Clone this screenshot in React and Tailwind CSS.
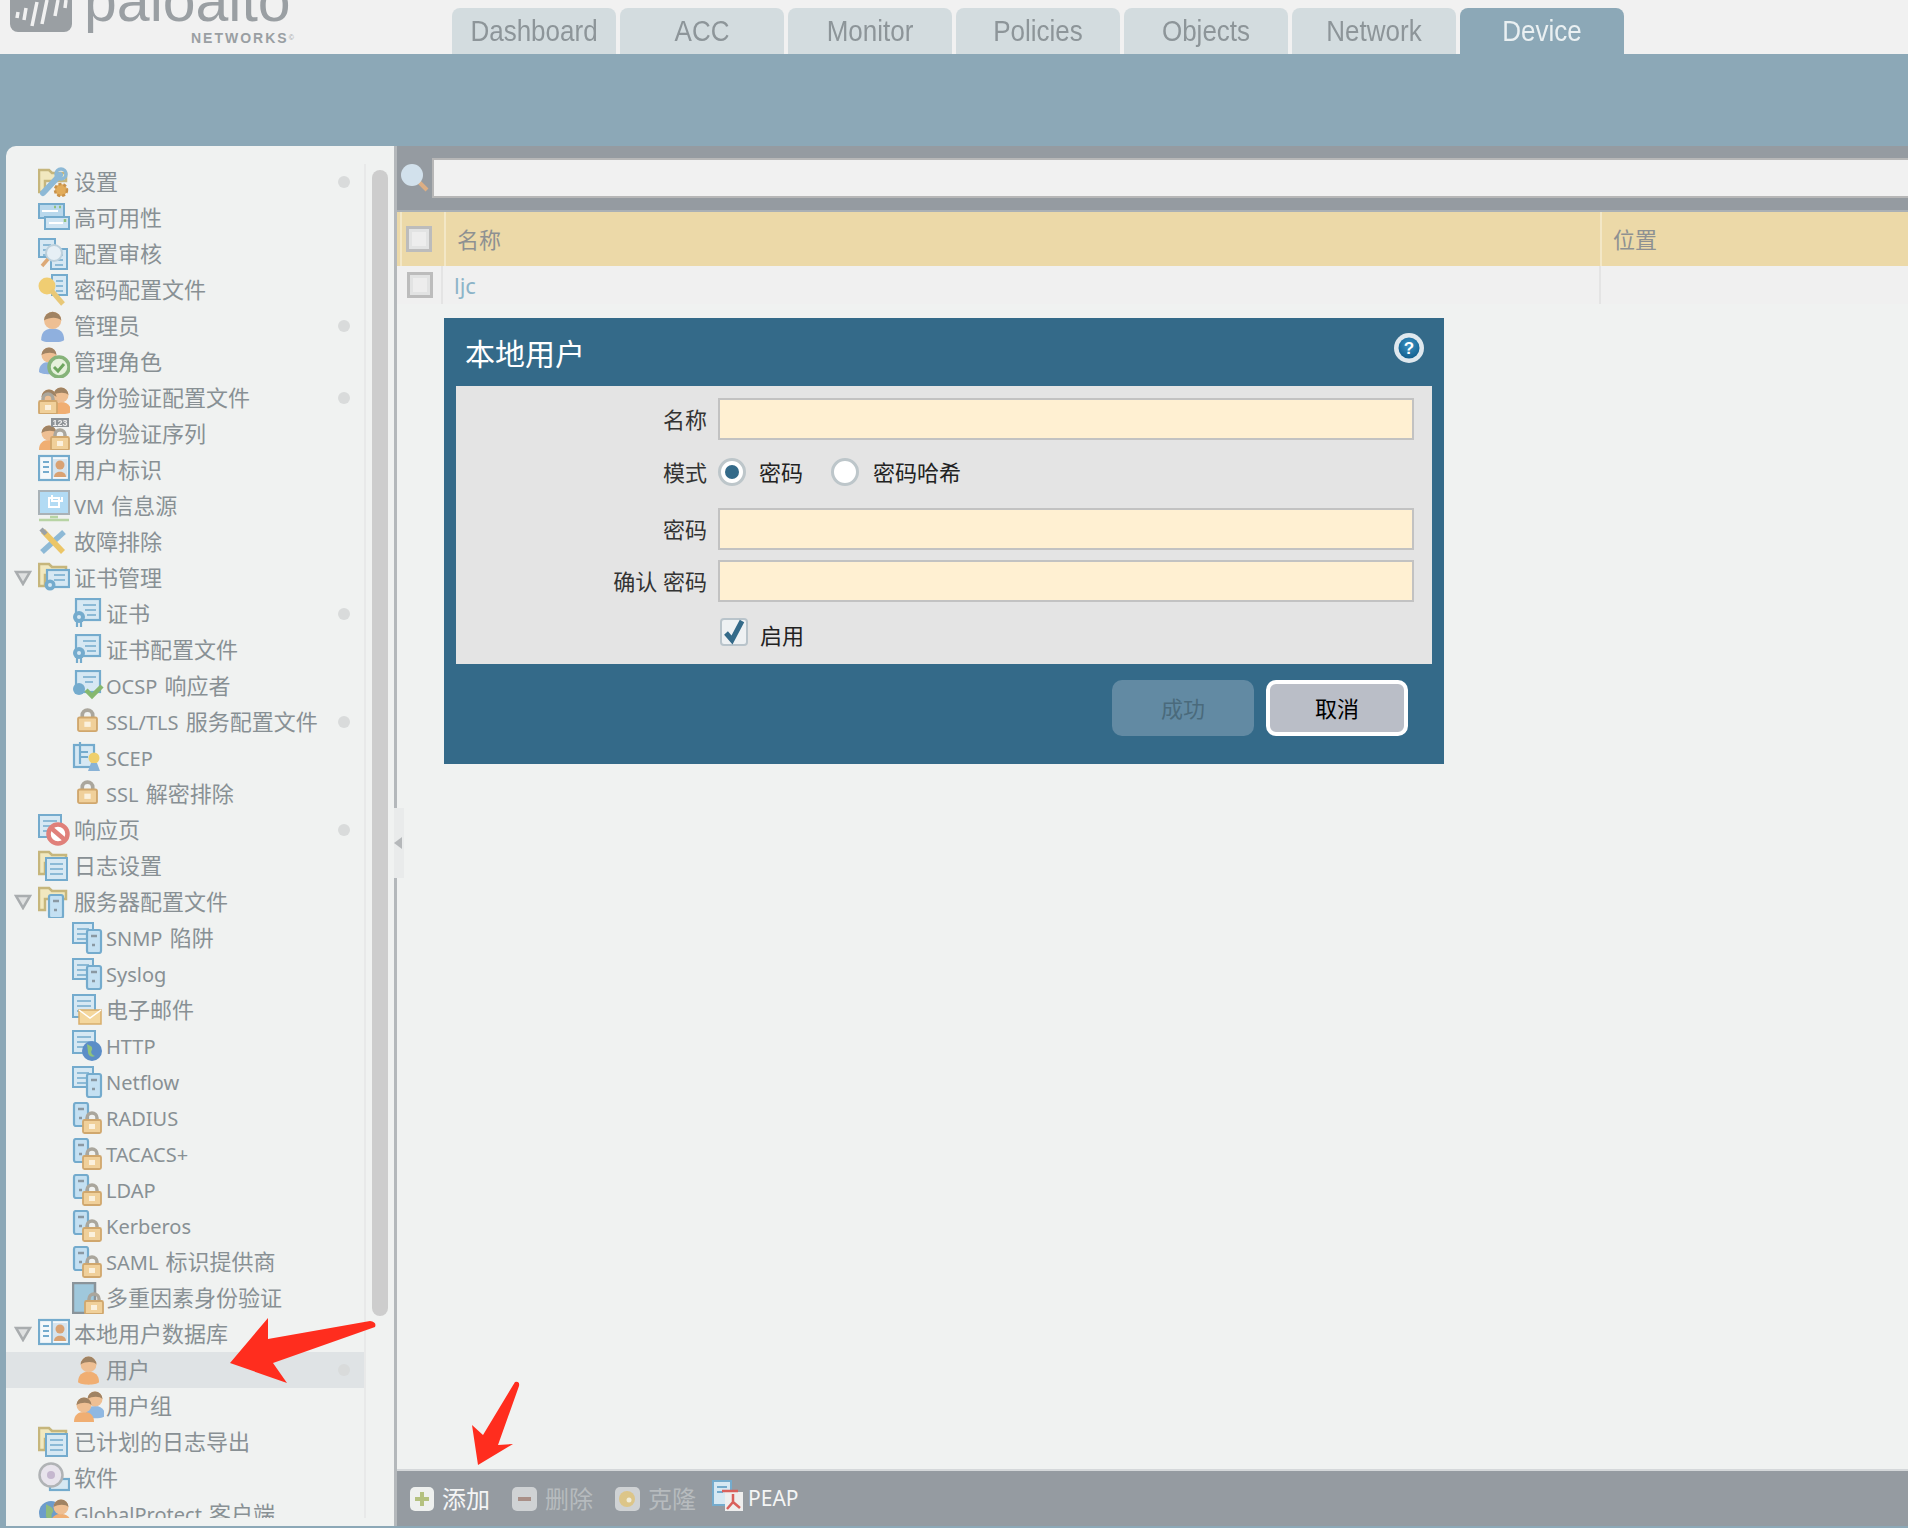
import React from "react";

const BLUE = "#74abcd";
const PALE = "#d6e8f3";

// latin in the tree renders smaller than the CJK next to it
const Mixed = ({ text }) =>
  text.split(/([\u4e00-\u9fff]+)/).map((part, i) =>
    /[\u4e00-\u9fff]/.test(part) ? (
      <span key={i}>{part}</span>
    ) : (
      <span key={i} className="text-[20px]">{part}</span>
    )
  );

// small drawing primitives for the tree icons (32x32 box)
const Doc = ({ x = 0, y = 0, w = 22, h = 24 }) => (
  <g>
    <rect x={x + 1} y={y + 1} width={w - 2} height={h - 2} fill={PALE} stroke={BLUE} strokeWidth="2" />
    <path d={`M${x + 5} ${y + 7}h${w - 10}M${x + 5} ${y + 12}h${w - 10}M${x + 5} ${y + 17}h${w - 10}`} stroke={BLUE} strokeWidth="1.6" />
  </g>
);
const Folder = ({ x = 0, y = 0 }) => (
  <path d={`M${x + 1} ${y + 24}V${y + 2}h10l3 3h14v8H${x + 7}v11z`} fill="#f1e8bf" stroke="#c6b67c" strokeWidth="2.5" />
);
const Server = ({ x = 0, y = 0 }) => (
  <g>
    <rect x={x + 1} y={y + 1} width="14" height="23" rx="2" fill="#c4e0f2" stroke={BLUE} strokeWidth="2.2" />
    <path d={`M${x + 5} ${y + 7}h6M${x + 6} ${y + 16}h3`} stroke="#8a98a2" strokeWidth="2.5" />
  </g>
);
const Lock = ({ x = 0, y = 0 }) => (
  <g>
    <path d={`M${x + 5} ${y + 9}V${y + 7}a5 5 0 0 1 10 0v2`} fill="none" stroke="#aaa69c" strokeWidth="3.5" />
    <rect x={x + 1} y={y + 9} width="18" height="13" rx="1.5" fill="#f0d09a" stroke="#d0a76d" strokeWidth="1.8" />
    <rect x={x + 7} y={y + 13} width="6" height="5" fill="#fbf1dd" />
  </g>
);
const Person = ({ x = 0, y = 0, s = 1, body = "#f0ae72" }) => (
  <g transform={`translate(${x} ${y}) scale(${s})`}>
    <path d="M1 26c0-7 4-10 10-10s10 3 10 10c-3 3-17 3-20 0z" fill={body} />
    <circle cx="11" cy="9" r="7.5" fill="#eebf93" />
    <path d="M3.5 9a7.5 7.5 0 0 1 15 0c-3-3-10-3-15 0z" fill="#a08363" />
  </g>
);

const icons = {
  settings: (
    <g>
      <Folder y={2} />
      <path d="M5 27L22 9" stroke="#8db9d6" strokeWidth="6" strokeLinecap="round" />
      <circle cx="23" cy="8" r="5" fill="none" stroke="#8db9d6" strokeWidth="3.5" />
      <circle cx="23" cy="24" r="6" fill="#e2ac5a" stroke="#c9924a" strokeDasharray="3 2" strokeWidth="2.5" />
    </g>
  ),
  ha: (
    <g>
      <rect x="1" y="2" width="25" height="14" fill="#b9d8ec" stroke={BLUE} strokeWidth="2" />
      <rect x="7" y="15" width="24" height="12" fill="#cfe4f2" stroke={BLUE} strokeWidth="2" />
      <path d="M4 9h16M11 21h14" stroke="#fff" strokeWidth="2" />
      <path d="M16 5h2M21 5h2M27 17v3" stroke="#8fc07d" strokeWidth="2.5" />
    </g>
  ),
  audit: (
    <g>
      <Doc w={18} h={20} />
      <Doc x={12} y={10} w={18} h={22} />
      <circle cx="16" cy="15" r="8" fill="#e6eff5" stroke="#bcd0dc" strokeWidth="2" />
      <path d="M10 21l-6 7" stroke="#dca977" strokeWidth="3.5" />
    </g>
  ),
  keydoc: (
    <g>
      <Doc x={13} w={17} h={22} />
      <circle cx="9" cy="12" r="8.5" fill="#f0cd72" />
      <path d="M13 16l12 14" stroke="#e8c878" strokeWidth="5" />
    </g>
  ),
  admin: <Person x={2} y={0} s={1.15} body="#8fb0de" />,
  role: (
    <g>
      <Person y={0} body="#8fb0de" />
      <circle cx="21" cy="21" r="10" fill="#e6f1dc" stroke="#86b37a" strokeWidth="3.5" />
      <path d="M16 21l4 4 6-7" stroke="#6ea65f" strokeWidth="3" fill="none" />
    </g>
  ),
  authprofile: (
    <g>
      <Person x={12} y={4} />
      <Person x={0} y={6} />
      <Lock x={0} y={10} />
    </g>
  ),
  authseq: (
    <g>
      <Person x={0} y={6} />
      <Lock x={12} y={10} />
      <rect x="13" y="0" width="18" height="9" fill="#8d9296" />
      <text x="22" y="8" textAnchor="middle" fontSize="9" fontWeight="700" fill="#eee" fontFamily="Liberation Sans">123</text>
    </g>
  ),
  userid: (
    <g>
      <rect x="1" y="2" width="30" height="24" fill="#f4f8fa" stroke={BLUE} strokeWidth="2.2" />
      <path d="M5 8h6M5 13h6M5 18h6" stroke={BLUE} strokeWidth="2" />
      <path d="M14 3v22" stroke={BLUE} strokeWidth="1.5" />
      <rect x="15" y="5" width="14" height="18" fill="#d6e4ee" />
      <circle cx="22" cy="11" r="4.5" fill="#d9a273" />
      <path d="M16 23c0-7 12-7 12 0z" fill="#d9a273" />
    </g>
  ),
  vm: (
    <g>
      <rect x="1" y="1" width="30" height="23" fill="#b2dbf4" stroke="#a9b2b7" strokeWidth="2" />
      <path d="M11 8h10v9h-10zM14 5v6h10v-4" fill="none" stroke="#fff" strokeWidth="2" />
      <path d="M12 27h8M1 30h30" stroke="#b7d4a4" strokeWidth="2.5" />
    </g>
  ),
  tools: (
    <g>
      <path d="M4 26L26 6" stroke="#8db9d6" strokeWidth="5.5" />
      <path d="M5 5l20 21" stroke="#ecc667" strokeWidth="5.5" />
      <path d="M3 3l5 5" stroke="#9aa1a6" strokeWidth="4.5" />
    </g>
  ),
  foldercert: (
    <g>
      <Folder />
      <rect x="9" y="8" width="22" height="17" fill={PALE} stroke={BLUE} strokeWidth="2.2" />
      <path d="M16 13h11M16 18h11" stroke={BLUE} strokeWidth="1.6" />
      <circle cx="12" cy="23" r="5.5" fill={BLUE} />
      <circle cx="12" cy="23" r="2" fill={PALE} />
    </g>
  ),
  cert: (
    <g>
      <rect x="4" y="1" width="24" height="21" fill={PALE} stroke={BLUE} strokeWidth="2.2" />
      <path d="M11 7h13M13 12h11M15 17h9" stroke={BLUE} strokeWidth="1.6" />
      <circle cx="7" cy="19" r="6" fill={BLUE} />
      <circle cx="7" cy="19" r="2" fill={PALE} />
      <path d="M5 24v5M9 24v5" stroke={BLUE} strokeWidth="2.2" />
    </g>
  ),
  certok: (
    <g>
      <rect x="4" y="1" width="24" height="21" fill={PALE} stroke={BLUE} strokeWidth="2.2" />
      <path d="M11 7h13M13 12h8" stroke={BLUE} strokeWidth="1.6" />
      <circle cx="7" cy="19" r="6" fill={BLUE} />
      <path d="M14 20l6 6 10-10" stroke="#86b86f" strokeWidth="4.5" fill="none" />
    </g>
  ),
  lock: <g transform="translate(5 2) scale(1.05)"><Lock /></g>,
  scep: (
    <g>
      <rect x="2" y="3" width="20" height="22" fill={PALE} stroke={BLUE} strokeWidth="2.2" />
      <path d="M8 0v22M7 10h9M7 15h9" stroke={BLUE} strokeWidth="2.2" />
      <circle cx="22" cy="16" r="5.5" fill="#efcf6c" />
      <path d="M19 21l-3 8h12l-3-8" fill="#88b2d6" />
    </g>
  ),
  response: (
    <g>
      <Doc w={24} h={24} />
      <circle cx="20" cy="20" r="9.5" fill="#fff" stroke="#e0807a" strokeWidth="4.5" />
      <path d="M13 14l14 12" stroke="#e0807a" strokeWidth="4.5" />
    </g>
  ),
  folderdoc: (
    <g>
      <Folder y={0} />
      <Doc x={7} y={7} w={23} h={24} />
    </g>
  ),
  folderserver: (
    <g>
      <Folder y={0} />
      <Server x={10} y={8} />
    </g>
  ),
  serverdoc: (
    <g>
      <Doc w={22} h={22} />
      <Server x={14} y={7} />
    </g>
  ),
  mail: (
    <g>
      <Doc w={24} h={24} />
      <rect x="7" y="16" width="22" height="14" fill="#f4d79d" stroke="#d7ae6c" strokeWidth="1.5" />
      <path d="M7 16l11 8 11-8" fill="none" stroke="#fff" strokeWidth="1.5" />
    </g>
  ),
  http: (
    <g>
      <Doc w={24} h={24} />
      <circle cx="20" cy="21" r="10" fill="#5b8dc7" />
      <path d="M15 14c3 2 6 2 5 6-2 2 0 5 3 6-4 2-7-1-7-4z" fill="#8fc27d" />
    </g>
  ),
  serverlock: (
    <g>
      <Server x={1} y={0} />
      <Lock x={10} y={9} />
    </g>
  ),
  tablet: (
    <g>
      <rect x="1" y="1" width="22" height="30" fill="#9fc8dc" stroke="#8a949a" strokeWidth="2.5" />
      <Lock x={12} y={10} />
    </g>
  ),
  user: <Person x={5} y={1} s={1.05} />,
  users: (
    <g>
      <Person x={12} y={0} body="#8fb8e2" />
      <Person x={1} y={6} />
    </g>
  ),
  disc: (
    <g>
      <rect x="12" y="17" width="19" height="11" fill={PALE} stroke={BLUE} strokeWidth="2.2" />
      <circle cx="13" cy="13" r="11.5" fill="#e8e4ec" stroke="#b0b3b5" strokeWidth="2.5" />
      <circle cx="13" cy="13" r="4" fill="#c5b7cf" />
    </g>
  ),
  gp: (
    <g>
      <circle cx="13" cy="15" r="12" fill="#6c9ccb" />
      <path d="M8 6c4 3 8 3 7 8-3 3-1 8 2 10-6 1-10-4-9-9z" fill="#8fbb7d" />
      <Person x={12} y={0} />
    </g>
  ),
};

const menu = [
  { label: "设置", icon: "settings", dot: true },
  { label: "高可用性", icon: "ha" },
  { label: "配置审核", icon: "audit" },
  { label: "密码配置文件", icon: "keydoc" },
  { label: "管理员", icon: "admin", dot: true },
  { label: "管理角色", icon: "role" },
  { label: "身份验证配置文件", icon: "authprofile", dot: true },
  { label: "身份验证序列", icon: "authseq" },
  { label: "用户标识", icon: "userid" },
  { label: "VM 信息源", icon: "vm" },
  { label: "故障排除", icon: "tools" },
  { label: "证书管理", icon: "foldercert", open: true },
  { label: "证书", icon: "cert", sub: true, dot: true },
  { label: "证书配置文件", icon: "cert", sub: true },
  { label: "OCSP 响应者", icon: "certok", sub: true },
  { label: "SSL/TLS 服务配置文件", icon: "lock", sub: true, dot: true },
  { label: "SCEP", icon: "scep", sub: true },
  { label: "SSL 解密排除", icon: "lock", sub: true },
  { label: "响应页", icon: "response", dot: true },
  { label: "日志设置", icon: "folderdoc" },
  { label: "服务器配置文件", icon: "folderserver", open: true },
  { label: "SNMP 陷阱", icon: "serverdoc", sub: true },
  { label: "Syslog", icon: "serverdoc", sub: true },
  { label: "电子邮件", icon: "mail", sub: true },
  { label: "HTTP", icon: "http", sub: true },
  { label: "Netflow", icon: "serverdoc", sub: true },
  { label: "RADIUS", icon: "serverlock", sub: true },
  { label: "TACACS+", icon: "serverlock", sub: true },
  { label: "LDAP", icon: "serverlock", sub: true },
  { label: "Kerberos", icon: "serverlock", sub: true },
  { label: "SAML 标识提供商", icon: "serverlock", sub: true },
  { label: "多重因素身份验证", icon: "tablet", sub: true },
  { label: "本地用户数据库", icon: "userid", open: true },
  { label: "用户", icon: "user", sub: true, dot: true, active: true },
  { label: "用户组", icon: "users", sub: true },
  { label: "已计划的日志导出", icon: "folderdoc" },
  { label: "软件", icon: "disc" },
  { label: "GlobalProtect 客户端", icon: "gp" },
];

const tabs = ["Dashboard", "ACC", "Monitor", "Policies", "Objects", "Network", "Device"];

const MenuRow = ({ item }) => (
  <div className={`flex items-center h-9 shrink-0 ${item.active ? "bg-[#dfe3e5]" : ""}`}>
    <div className={`flex items-center pl-2 shrink-0 ${item.sub ? "w-[66px]" : "w-8"}`}>
      {item.open && (
        <svg width="18" height="16" viewBox="0 0 18 16">
          <path d="M2 2h14l-7 12z" fill="#dfe1e1" stroke="#a9adaf" strokeWidth="2.5" />
        </svg>
      )}
    </div>
    <svg width="32" height="32" viewBox="0 0 32 32" className="shrink-0 blur-[0.5px]">{icons[item.icon]}</svg>
    <span className={`whitespace-nowrap text-[22px] leading-none text-[#889094] [word-spacing:2px] -translate-y-px ${item.sub ? "ml-0.5" : "ml-1"}`}>
      <Mixed text={item.label} />
    </span>
    {item.dot && <span className="ml-auto mr-[14px] w-3 h-3 rounded-full bg-[#d9dbdb] shrink-0" />}
  </div>
);

const TableCheck = () => (
  <div className="w-[26px] h-[26px] border-[3px] border-[#bcbcbc] bg-[#e2e3e3] p-[3px]">
    <div className="w-full h-full bg-[#ededed]" />
  </div>
);

const Field = ({ label }) => (
  <div className="flex items-center h-[42px]">
    <span className="w-[251px] text-right text-[22px] leading-none text-[#333]">{label}</span>
    <div className="ml-[11px] w-[696px] h-[42px] border-2 border-[#c2c2c2] bg-[#fff0d2]" />
  </div>
);

const Radio = ({ checked }) => (
  <span className="flex items-center justify-center w-7 h-7 rounded-full bg-white border-[3px] border-[#bdc6ca]">
    {checked && <span className="w-[14px] h-[14px] rounded-full bg-[#346a89]" />}
  </span>
);

const ToolButton = ({ children, label, disabled, className }) => (
  <div className={`flex items-center ${className}`}>
    {children}
    <span className={`text-[24px] leading-none ${disabled ? "text-[#b7bbbe]" : "text-[#f4f5f5]"}`}>{label}</span>
  </div>
);

function LocalUserDialog() {
  return (
    <div className="absolute left-[47px] top-[172px] w-[1000px] h-[446px] bg-[#346a89] flex flex-col">
      <div className="flex items-center justify-between h-[68px] pl-[21px] pr-5 shrink-0">
        <span className="text-[30px] leading-none text-white mt-[4px]">本地用户</span>
        <svg width="30" height="30" viewBox="0 0 30 30" className="-mt-[8px]">
          <defs>
            <radialGradient id="helpFill" cx="50%" cy="35%" r="70%">
              <stop offset="0%" stopColor="#3d94c4" />
              <stop offset="100%" stopColor="#0e5a8a" />
            </radialGradient>
          </defs>
          <circle cx="15" cy="15" r="15" fill="#dfe8ee" />
          <circle cx="15" cy="15" r="10.5" fill="url(#helpFill)" />
          <text x="15" y="21" textAnchor="middle" fontSize="17" fontWeight="700" fill="#fff" fontFamily="Liberation Sans">?</text>
        </svg>
      </div>
      <div className="mx-3 h-[278px] bg-[#e4e4e4] pt-3 shrink-0">
        <Field label="名称" />
        <div className="flex items-center h-[68px] pb-1">
          <span className="w-[251px] text-right text-[22px] leading-none text-[#333]">模式</span>
          <div className="ml-[11px] flex items-center">
            <Radio checked />
            <span className="ml-[13px] text-[22px] leading-none text-[#222]">密码</span>
            <span className="ml-[28px]"><Radio /></span>
            <span className="ml-[14px] text-[22px] leading-none text-[#222]">密码哈希</span>
          </div>
        </div>
        <Field label="密码" />
        <div className="mt-[10px]"><Field label="确认 密码" /></div>
        <div className="flex items-center mt-4 pl-[264px]">
          <span className="flex items-center justify-center w-7 h-7 rounded-[4px] bg-[#eef1f3] border-2 border-[#b9c4cb]">
            <svg width="26" height="26" viewBox="0 0 24 24">
              <path d="M4 13l6 7L20 1" fill="none" stroke="#346a89" strokeWidth="5" />
            </svg>
          </span>
          <span className="ml-3 mt-[6px] text-[22px] leading-none text-[#222]">启用</span>
        </div>
      </div>
      <div className="flex justify-end gap-3 pt-4 pr-9">
        <div className="flex items-center justify-center w-[142px] h-14 rounded-[10px] bg-[#628aa3] text-[22px] text-[#4a6a7c]">成功</div>
        <div className="flex items-center justify-center w-[142px] h-14 rounded-[10px] border-4 border-white bg-[#babec7] text-[22px] text-black">取消</div>
      </div>
    </div>
  );
}

export default function App() {
  return (
    <div className="relative w-[1908px] h-[1528px] overflow-hidden flex flex-col bg-[#8ca8b7] font-['Noto_Sans','Noto_Sans_CJK_SC',sans-serif]">
      {/* header */}
      <div className="h-[54px] shrink-0 bg-[#f1f1f1] flex overflow-hidden">
        <div className="w-[452px] shrink-0 relative">
          <svg width="64" height="32" viewBox="0 0 64 32" className="absolute left-[10px] top-0 blur-[0.5px]">
            <path d="M0 0h62v24a8 8 0 0 1-8 8H8a8 8 0 0 1-8-8z" fill="#9a9fa3" />
            <path d="M8 12l-1 6M16 8l-2 12M27 2l-5 24M37 0l-5 24M48 0l-3 16M56 0l-1 8" stroke="#f1f1f1" strokeWidth="3.5" />
          </svg>
          <span className="absolute left-[84px] -top-[32px] text-[59px] leading-[66px] text-[#9a9fa3] font-['Liberation_Sans',sans-serif]">paloalto</span>
          <span className="absolute left-[191px] top-[30px] text-[14px] leading-[16px] font-bold tracking-[2px] text-[#9a9fa3] font-['Liberation_Sans',sans-serif]">
            NETWORKS<sup className="text-[7px] font-normal">©</sup>
          </span>
        </div>
        <div className="flex items-end gap-1">
          {tabs.map((t) => (
            <div
              key={t}
              className={`flex items-center justify-center w-[164px] h-[46px] rounded-t-[8px] ${t === "Device" ? "bg-[#8ca8b7] text-[#eaf0f2]" : "bg-[#d3dcdf] text-[#8d9599]"}`}
            >
              <span className="inline-block scale-y-[1.15] text-[26px] leading-none font-['Liberation_Sans',sans-serif]">{t}</span>
            </div>
          ))}
        </div>
      </div>

      {/* blue band */}
      <div className="h-[92px] shrink-0" />

      {/* body */}
      <div className="flex-1 min-h-0 flex pl-[6px] pb-[2px] relative">
        {/* sidebar */}
        <div className="w-[388px] shrink-0 rounded-tl-[10px] bg-[#f0f2f1] flex pt-[18px] pb-2">
          <div className="w-[360px] shrink-0 flex flex-col overflow-hidden border-r-2 border-[#e8e9e9]">
            {menu.map((m) => (
              <MenuRow key={m.label} item={m} />
            ))}
          </div>
          <div className="ml-[6px] mt-[6px] w-4 h-[1146px] rounded-full bg-[#cdcdcd]" />
        </div>

        {/* right panel */}
        <div className="flex-1 min-w-0 flex flex-col border-l-[3px] border-[#b4b8bb] bg-[#f0f2f1] relative">
          <div className="h-16 shrink-0 bg-[#959ba1] flex items-center pl-[3px] overflow-hidden">
            <svg width="30" height="30" viewBox="0 0 30 30" className="shrink-0 blur-[0.5px]">
              <path d="M18 18l9 9" stroke="#dcae84" strokeWidth="4" />
              <circle cx="12" cy="12" r="11" fill="#d2e1ec" />
            </svg>
            <div className="ml-[2px] flex-1 h-10 border-2 border-r-0 border-[#b7b7b7] bg-[#f1f1f1]" />
          </div>
          <div className="h-[56px] shrink-0 border-t-2 border-[#aab0b5] bg-[#ecd9a8] flex items-center text-[22px] text-[#8e9192]">
            <div className="w-[3px] h-full" />
            <div className="w-[46px] h-full flex items-center pl-1 border-l-2 border-r-2 border-[#f3e7c6] shrink-0"><TableCheck /></div>
            <span className="ml-[11px] w-[1143px] shrink-0">名称</span>
            <div className="h-full border-l-2 border-[#f3e7c6] pl-[11px] flex items-center"><span>位置</span></div>
          </div>
          <div className="h-[38px] shrink-0 bg-[#f0f0f0] flex items-center text-[22px] text-[#8cb4c8]">
            <div className="w-[46px] h-full flex items-center justify-center border-r-2 border-[#e4e4e4] shrink-0 pl-[2px]"><TableCheck /></div>
            <span className="ml-[11px] w-[1145px] shrink-0">ljc</span>
            <div className="h-full border-l-2 border-[#e4e4e4]" />
          </div>
          <div className="flex-1 min-h-0" />
          <div className="h-[57px] shrink-0 bg-[#959ba1] border-t-2 border-[#d5d8da] flex items-center pl-[13px]">
            <ToolButton label="添加" className="w-[102px]">
              <svg width="24" height="24" viewBox="0 0 24 24" className="mr-2 blur-[0.5px]">
                <rect width="24" height="24" rx="5" fill="#eef0ee" />
                <path d="M12 5v14M5 12h14" stroke="#b4c17f" strokeWidth="4" />
              </svg>
            </ToolButton>
            <ToolButton label="删除" disabled className="w-[103px]">
              <svg width="25" height="24" viewBox="0 0 25 24" className="mr-2 blur-[0.5px]">
                <rect width="25" height="24" rx="5" fill="#cfd2d4" />
                <path d="M6 12h13" stroke="#a98f87" strokeWidth="4" />
              </svg>
            </ToolButton>
            <ToolButton label="克隆" disabled className="w-[97px]">
              <svg width="25" height="24" viewBox="0 0 25 24" className="mr-2 blur-[0.5px]">
                <rect width="25" height="24" rx="5" fill="#cfd2d4" />
                <circle cx="12" cy="12" r="8" fill="#dcc588" />
                <circle cx="14" cy="13" r="2.5" fill="#f0ecd8" />
              </svg>
            </ToolButton>
            <div className="flex items-center">
              <svg width="32" height="32" viewBox="0 0 32 32" className="mr-[4px] -mt-[6px] blur-[0.4px]">
                <rect x="1" y="1" width="18" height="24" fill={PALE} stroke={BLUE} strokeWidth="2" />
                <path d="M5 7h10M5 12h6" stroke={BLUE} strokeWidth="2" />
                <rect x="13" y="12" width="18" height="19" fill="#eee" />
                <path d="M10 11h16M21 14v8l-6 7M21 22l7 6" stroke="#d9605c" strokeWidth="2.5" fill="none" />
              </svg>
              <span className="text-[21px] leading-none text-[#f4f5f5]">PEAP</span>
            </div>
          </div>

          {/* collapse handle on the splitter */}
          <div className="absolute -left-[3px] top-[662px] w-[10px] h-[70px] bg-[#e9ebeb] flex items-center">
            <svg width="8" height="12" viewBox="0 0 8 12">
              <path d="M8 0v12L0 6z" fill="#b5b8ba" />
            </svg>
          </div>

          <LocalUserDialog />
        </div>
      </div>

      {/* red annotation arrows */}
      <svg className="absolute left-0 top-0 pointer-events-none" width="1908" height="1528" viewBox="0 0 1908 1528">
        <path
          d="M230 1363L268 1318L268 1339L370 1321Q377 1322 375 1327L273 1363L287 1383Z"
          fill="#ff2d1e"
        />
        <path
          d="M478 1465L472 1425L483 1435L515 1382Q520 1381 519 1386L498 1445L513 1444Z"
          fill="#ff2d1e"
        />
      </svg>
    </div>
  );
}
